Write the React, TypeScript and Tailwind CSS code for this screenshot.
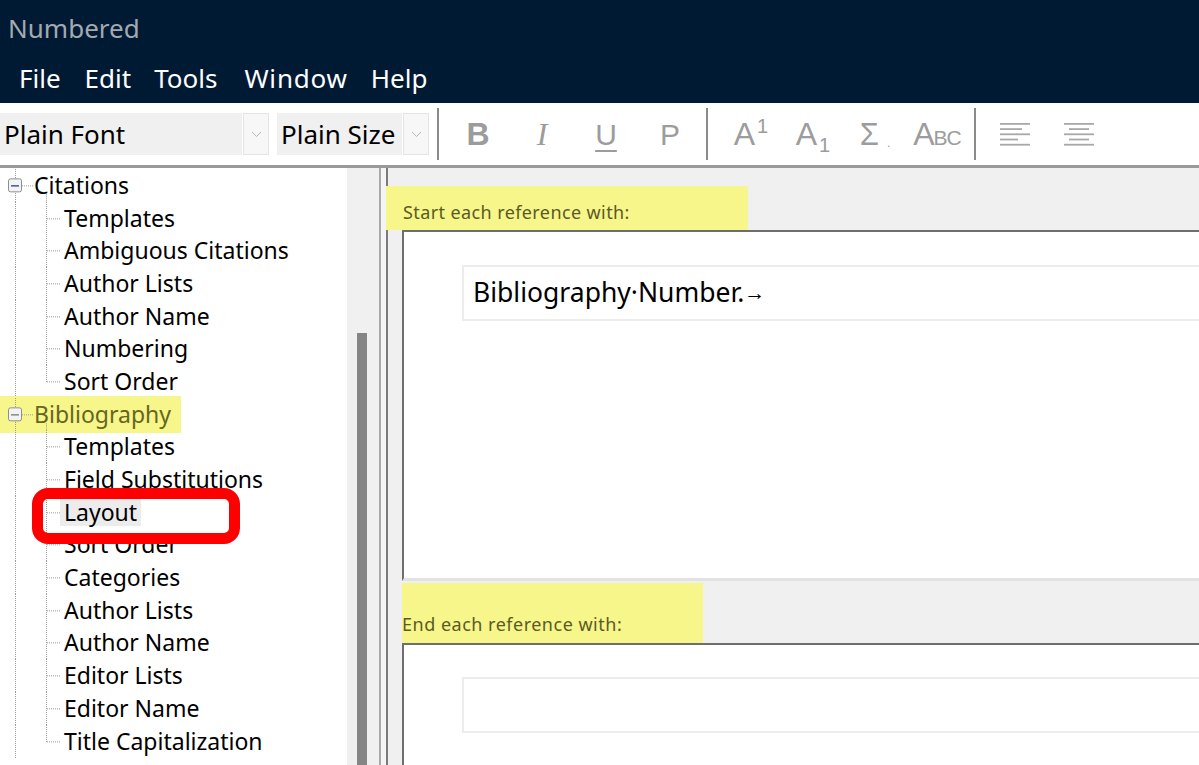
import React from 'react';

type TreeNode = {
  label: string;
  kind: 'parent' | 'child';
  last?: boolean;
  highlight?: boolean;
  selected?: boolean;
  hover?: boolean;
};

const tree: TreeNode[] = [
  { label: 'Citations', kind: 'parent', hover: true },
  { label: 'Templates', kind: 'child' },
  { label: 'Ambiguous Citations', kind: 'child' },
  { label: 'Author Lists', kind: 'child' },
  { label: 'Author Name', kind: 'child' },
  { label: 'Numbering', kind: 'child' },
  { label: 'Sort Order', kind: 'child', last: true },
  { label: 'Bibliography', kind: 'parent', highlight: true },
  { label: 'Templates', kind: 'child' },
  { label: 'Field Substitutions', kind: 'child' },
  { label: 'Layout', kind: 'child', selected: true },
  { label: 'Sort Order', kind: 'child' },
  { label: 'Categories', kind: 'child' },
  { label: 'Author Lists', kind: 'child' },
  { label: 'Author Name', kind: 'child' },
  { label: 'Editor Lists', kind: 'child' },
  { label: 'Editor Name', kind: 'child' },
  { label: 'Title Capitalization', kind: 'child', last: true },
];

const C = 16.35;

function Connector({ node }: { node: TreeNode }) {
  const dot = { stroke: '#9c9c9c', strokeWidth: 1, strokeDasharray: '1 1' };
  if (node.kind === 'parent') {
    return (
      <svg width="34" height="33" className="shrink-0 overflow-visible">
        <line x1="15.5" y1="0" x2="15.5" y2="33" {...dot} />
        <line x1="22" y1={C + 0.5} x2="33" y2={C + 0.5} {...dot} />
        <line x1="46.5" y1={C + 9} x2="46.5" y2="33" {...dot} />
        <rect x="8.5" y={C - 6.5} width="13" height="13" rx="2" fill="#f3f3f3" stroke="#8e8e8e" />
        <line x1="11" y1={C + 0.5} x2="19" y2={C + 0.5} stroke={node.hover ? '#3d5a98' : '#8a8a8a'} strokeWidth="1.5" />
      </svg>
    );
  }
  return (
    <svg width="60" height="33" className="shrink-0 overflow-visible">
      <line x1="15.5" y1="0" x2="15.5" y2="33" {...dot} />
      <line x1="46.5" y1="0" x2="46.5" y2={node.last ? C + 0.5 : 33} {...dot} />
      <line x1="47" y1={C + 0.5} x2="60" y2={C + 0.5} {...dot} />
    </svg>
  );
}

function TreeRow({ node }: { node: TreeNode }) {
  if (node.highlight) {
    return (
      <div className="flex h-[32.7px] items-center">
        <div className="flex h-[37px] items-center bg-[#f6f68a] pr-[10px]">
          <Connector node={node} />
          <span className="text-[#66661e]">{node.label}</span>
        </div>
      </div>
    );
  }
  return (
    <div className="flex h-[32.7px] items-center">
      <Connector node={node} />
      <span
        className={
          node.kind === 'child'
            ? node.selected
              ? 'flex h-[28px] items-center bg-[#ececec] px-[4px]'
              : 'px-[4px]'
            : ''
        }
      >
        {node.label}
      </span>
    </div>
  );
}

function Combo({ label, textW }: { label: string; textW: string }) {
  return (
    <div className="flex h-[42px] items-stretch">
      <div className={`${textW} flex items-center bg-[#f0f0f0] pl-[4px] text-[26px] text-black`}>{label}</div>
      <div className="ml-[1px] flex w-[26px] items-center justify-center border border-[#e4e4e4] bg-[#f7f7f7]">
        <svg width="11" height="7" viewBox="0 0 11 7">
          <path d="M1 1l4.5 4.5L10 1" fill="none" stroke="#b4b4b4" strokeWidth="1" />
        </svg>
      </div>
    </div>
  );
}

function Sep() {
  return <div className="h-[52px] w-[2px] bg-[#8a8a8a]" />;
}

function AlignIcon({ center }: { center?: boolean }) {
  const widths = center ? [30, 20, 30, 20, 30] : [30, 22, 30, 18, 30];
  return (
    <svg width="30" height="24" viewBox="0 0 30 24">
      {widths.map((w, i) => {
        const x = center ? (30 - w) / 2 : 0;
        return <rect key={i} x={x} y={1 + i * 5.2} width={w} height="1.8" fill="#a8a8a8" />;
      })}
    </svg>
  );
}

export default function App() {
  return (
    <div className="flex h-[765px] w-[1199px] flex-col overflow-hidden bg-white font-['Noto_Sans','Liberation_Sans',sans-serif]">
      {/* title bar + menu */}
      <div className="flex h-[103px] shrink-0 flex-col bg-[#001a33]">
        <div className="flex h-[56px] items-center pl-[8px] text-[26px] text-[#a3a9b1]">Numbered</div>
        <div className="flex h-[47px] items-center pb-[3px] pl-[19px] text-[26px] text-white">
          <span>File</span>
          <span className="ml-[24px]">Edit</span>
          <span className="ml-[23px]">Tools</span>
          <span className="ml-[27px] tracking-[0.8px]">Window</span>
          <span className="ml-[23px]">Help</span>
        </div>
      </div>

      {/* toolbar */}
      <div className="flex h-[65px] shrink-0 items-center border-b-[3px] border-[#9a9a9a] bg-white">
        <Combo label="Plain Font" textW="w-[242px]" />
        <div className="w-[8px]" />
        <Combo label="Plain Size" textW="w-[125px]" />
        <div className="ml-[8px]">
          <Sep />
        </div>
        <div className="ml-[7px] flex items-center text-[#9c9c9c]">
          <div className="flex w-[64px] justify-center font-['Liberation_Sans'] text-[32px] font-bold">B</div>
          <div className="flex w-[64px] justify-center font-['Liberation_Serif'] text-[32px] italic">I</div>
          <div className="flex w-[64px] justify-center font-['Liberation_Sans'] text-[30px] underline decoration-2 underline-offset-[5px]">U</div>
          <div className="flex w-[64px] justify-center font-['Liberation_Sans'] text-[30px]">P</div>
        </div>
        <div className="ml-[4px]">
          <Sep />
        </div>
        <div className="ml-[12px] flex items-center font-['Liberation_Sans'] text-[#9c9c9c]">
          <div className="flex w-[62px] items-start justify-center">
            <span className="text-[32px] leading-none">A</span>
            <span className="ml-[2px] mt-[-2px] text-[20px] leading-none">1</span>
          </div>
          <div className="flex w-[62px] items-end justify-center">
            <span className="text-[32px] leading-none">A</span>
            <span className="mb-[-5px] ml-[2px] text-[20px] leading-none">1</span>
          </div>
          <div className="flex w-[62px] items-end justify-center">
            <span className="text-[31px] leading-none">Σ</span>
            <span className="mb-[1px] ml-[8px] text-[12px] leading-none">.</span>
          </div>
          <div className="flex w-[62px] items-baseline justify-center">
            <span className="text-[32px] leading-none">A</span>
            <span className="-ml-[1px] text-[21px] leading-none tracking-[-1px]">BC</span>
          </div>
        </div>
        <div className="ml-[6px]">
          <Sep />
        </div>
        <div className="ml-[7px] flex items-center">
          <div className="flex w-[64px] justify-center">
            <AlignIcon />
          </div>
          <div className="flex w-[64px] justify-center">
            <AlignIcon center />
          </div>
        </div>
      </div>

      {/* body */}
      <div className="flex min-h-0 flex-1">
        {/* tree */}
        <div className="relative w-[347px] shrink-0 overflow-hidden bg-white pt-[1px] text-[23px] leading-none text-black">
          {tree.map((n, i) => (
            <TreeRow key={i} node={n} />
          ))}
          <div className="absolute left-[32px] top-[320px] h-[56px] w-[208px] rounded-[16px] border-[11px] border-[#ff0000]" />
        </div>

        {/* scrollbar */}
        <div className="flex w-[32px] shrink-0 flex-col bg-[#f0f0f0]">
          <div className="h-[165px]" />
          <div className="ml-[10px] w-[10px] flex-1 bg-[#858585]" />
        </div>
        <div className="w-[2px] shrink-0 bg-[#a9a9a9]" />
        <div className="w-[5px] shrink-0 bg-[#f4f4f4]" />
        <div className="w-[2px] shrink-0 bg-[#7a7a7a]" />

        {/* right pane */}
        <div className="flex min-w-0 flex-1 flex-col bg-[#f0f0f0] pl-[14px]">
          <div className="flex h-[62px] shrink-0 items-end">
            <div className="-ml-[16px] flex h-[44px] w-[362px] items-center bg-[#f6f68a] pl-[17px] pt-[8px] text-[18px] tracking-[0.4px] text-[#5c5a24]">
              Start each reference with:
            </div>
          </div>
          <div className="h-[351px] shrink-0 border-b-[3px] border-l-2 border-t-2 border-b-[#e2e2e2] border-l-[#6e6e6e] border-t-[#6e6e6e] bg-white pl-[58px] pt-[33px]">
            <div className="-mr-[10px] flex h-[56px] items-center border-2 border-[#ececec] pl-[9px] text-[26.5px] text-black">
              <span>Bibliography·Number.</span>
              <span className="text-[21px]">→</span>
            </div>
          </div>
          <div className="flex h-[62px] shrink-0 items-stretch pt-[2px]">
            <div className="flex w-[301px] items-end bg-[#f6f68a] pb-[5px] text-[18px] tracking-[0.5px] text-[#5c5a24]">
              End each reference with:
            </div>
          </div>
          <div className="flex-1 border-l-2 border-t-2 border-[#6e6e6e] bg-white pl-[58px] pt-[32px]">
            <div className="-mr-[10px] h-[56px] border-2 border-[#ececec]" />
          </div>
        </div>
      </div>
    </div>
  );
}
